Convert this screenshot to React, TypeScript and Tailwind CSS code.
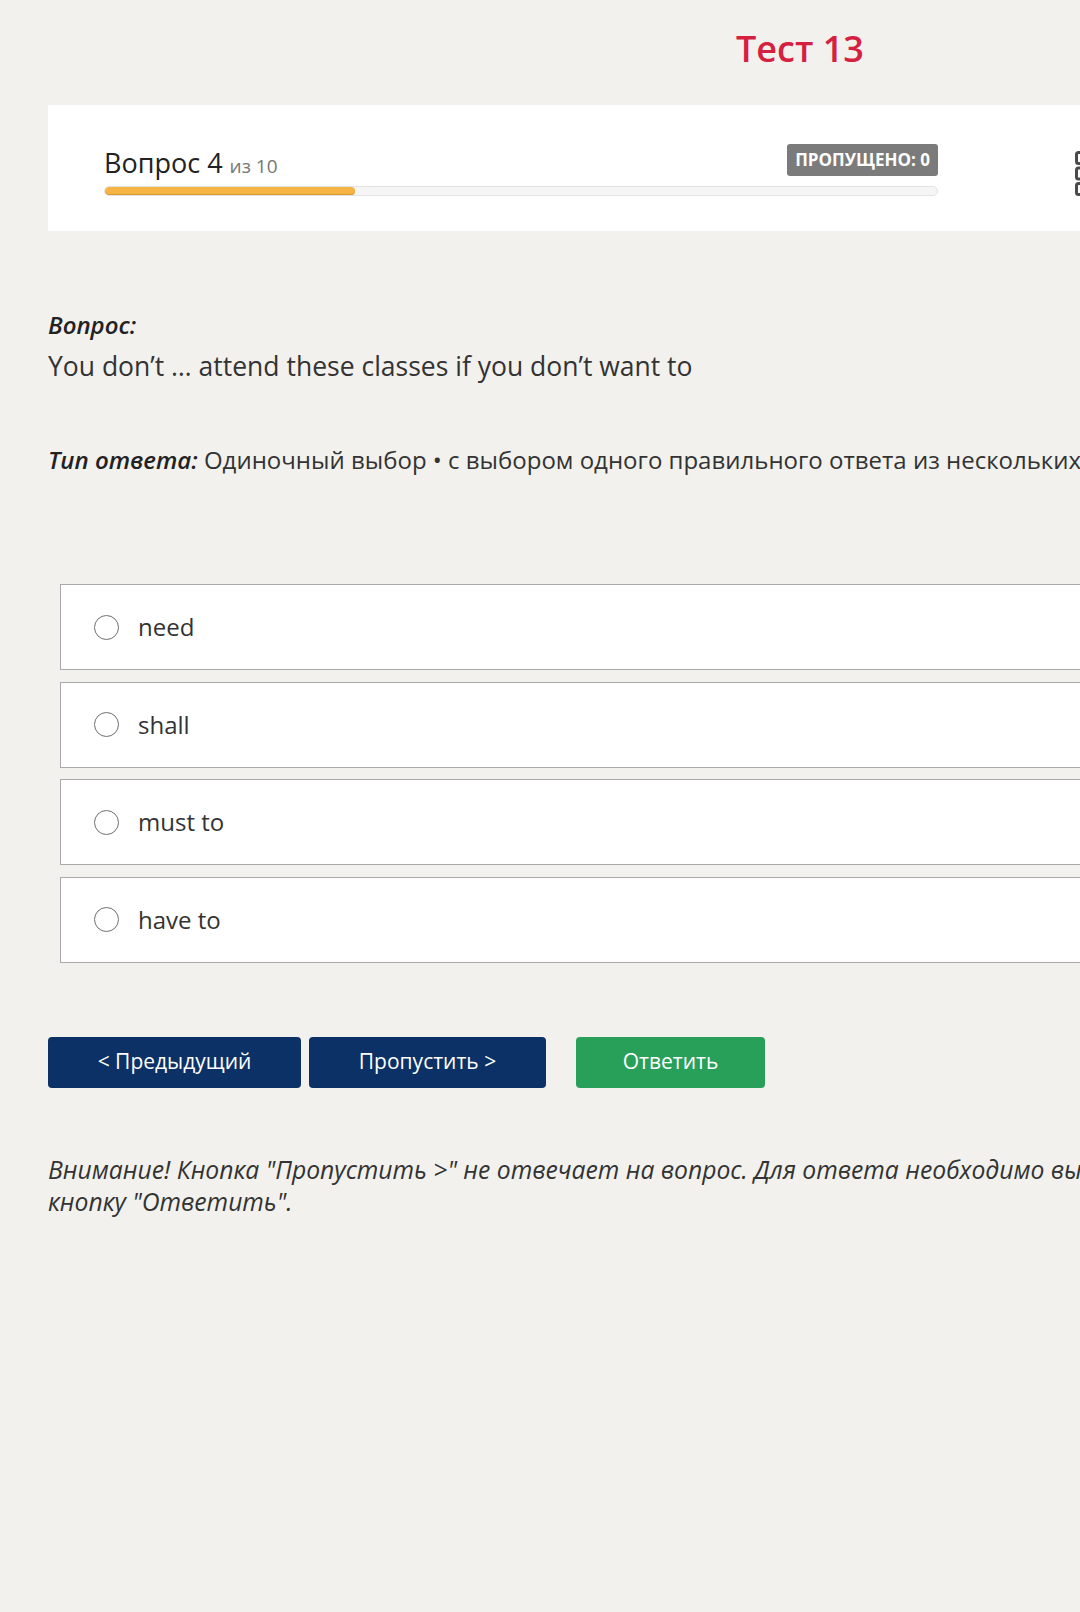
import React from "react";

const options = ["need", "shall", "must to", "have to"];

function GridIcon() {
  return (
    <svg width="46" height="46" viewBox="0 0 46 46" fill="none">
      {[0, 1, 2].map((r) =>
        [0, 1, 2].map((c) => (
          <rect
            key={`${r}-${c}`}
            x={1.5 + c * 15.5}
            y={1.5 + r * 15.5}
            width="11"
            height="11"
            rx="2"
            stroke="#4a4a4a"
            strokeWidth="3"
          />
        ))
      )}
    </svg>
  );
}

export default function App() {
  return (
    <div
      className="min-h-[1612px] w-full overflow-hidden bg-[#f2f1ee] text-[#333333]"
      style={{ fontFamily: '"Open Sans", "Noto Sans", sans-serif' }}
    >
      <div className="ml-[48px] w-[1504px] pt-[26px]">
        <h1 className="text-center text-[36px] font-semibold leading-[46px] text-[#d5213f]">
          Тест 13
        </h1>

        <div className="mt-[33px] flex h-[126px] items-start bg-white pl-[56px] pt-[39px]">
          <div className="w-[834px]">
            <div className="flex items-end justify-between">
              <div className="leading-none">
                <span className="text-[27px] text-[#222]">Вопрос 4</span>
                <span className="ml-[7px] text-[19px] text-[#777]">из 10</span>
              </div>
              <div className="flex h-[32px] items-center rounded-[3px] bg-[#7b7b7b] px-[8px] text-[17px] font-bold text-white">
                ПРОПУЩЕНО: 0
              </div>
            </div>
            <div className="mt-[10px] h-[10px] w-full overflow-hidden rounded-full border border-[#e3e3e3] bg-[#f5f5f5]">
              <div
                className="h-full rounded-full bg-[#f6b445] shadow-[inset_0_-1px_0_#d99a2b]"
                style={{ width: "30%" }}
              />
            </div>
          </div>
          <div className="ml-[137px] mt-[7px]">
            <GridIcon />
          </div>
        </div>

        <div className="mt-[78px]">
          <div className="text-[24px] font-semibold italic leading-[32px] text-[#222]">
            Вопрос:
          </div>
          <div className="mt-[8px] text-[26.5px] leading-[34px] text-[#333]">
            You don’t … attend these classes if you don’t want to
          </div>
        </div>

        <div className="mt-[61px] whitespace-nowrap text-[24px] leading-[32px] text-[#333]">
          <span className="font-semibold italic text-[#222]">Тип ответа:</span>{" "}
          Одиночный выбор • с выбором одного правильного ответа из нескольких предложенных вариантов
        </div>

        <div className="ml-[12px] mt-[108px] flex flex-col gap-[11.5px]">
          {options.map((o) => (
            <div
              key={o}
              className="flex h-[86px] items-center border-[1.5px] border-[#a9a9a9] bg-white pl-[33px]"
            >
              <span className="h-[25px] w-[25px] rounded-full border-[1.5px] border-[#6f6f6f] bg-white" />
              <span className="ml-[19px] text-[24px] text-[#333]">{o}</span>
            </div>
          ))}
        </div>

        <div className="mt-[74px] flex items-center">
          <button className="flex h-[51px] w-[253px] items-center justify-center rounded-[4px] bg-[#0b3166] text-[21px] text-white">
            &lt; Предыдущий
          </button>
          <button className="ml-[8px] flex h-[51px] w-[237px] items-center justify-center rounded-[4px] bg-[#0b3166] text-[21px] text-white">
            Пропустить &gt;
          </button>
          <button className="ml-[30px] flex h-[51px] w-[189px] items-center justify-center rounded-[4px] bg-[#28a05a] text-[21px] text-white">
            Ответить
          </button>
        </div>

        <p className="mt-[66px] text-[24.7px] italic leading-[32px] text-[#333]">
          Внимание! Кнопка "Пропустить &gt;" не отвечает на вопрос. Для ответа необходимо выбрать вариант ответа и нажать
          <br />
          кнопку "Ответить".
        </p>
      </div>
    </div>
  );
}
